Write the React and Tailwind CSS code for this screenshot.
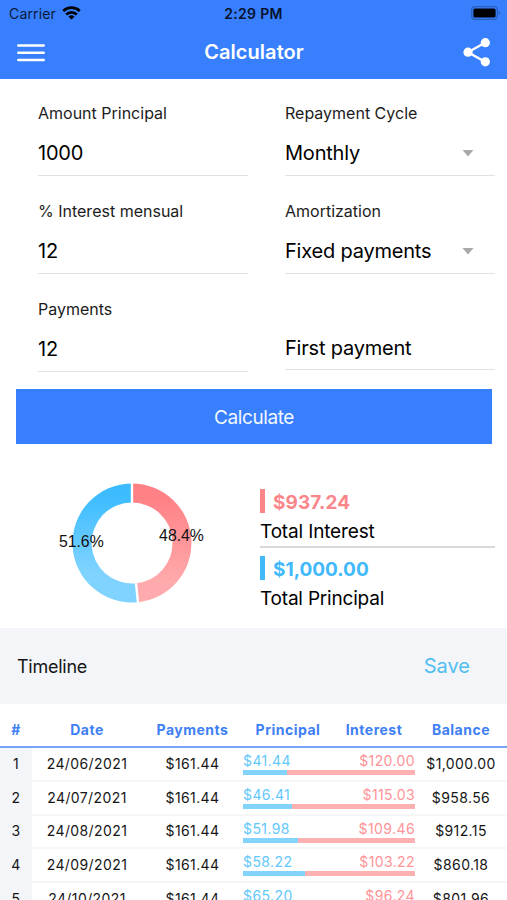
const payments = [
  { date: '24/06/2021', principal: 41.44, interest: 120.0, balance: '$1,000.00' },
  { date: '24/07/2021', principal: 46.41, interest: 115.03, balance: '$958.56' },
  { date: '24/08/2021', principal: 51.98, interest: 109.46, balance: '$912.15' },
  { date: '24/09/2021', principal: 58.22, interest: 103.22, balance: '$860.18' },
  { date: '24/10/2021', principal: 65.2, interest: 96.24, balance: '$801.96' },
]

const tableCols = 'grid grid-cols-[32px_110px_101px_172px_92px]'

function StatusBar() {
  return (
    <div className="flex h-[27px] items-center justify-between pl-[9px] pr-[6px] text-[#0b1a3c]">
      <div className="flex w-[180px] items-center gap-[6px]">
        <span className="text-[14px] tracking-[0.15px]">Carrier</span>
        <svg width="19" height="14" viewBox="0 0 19 14" fill="none" stroke="#000" strokeWidth="2.6" className="mb-[1px]">
          <path d="M1.200 5a12 12 0 0 1 16.600 0" />
          <path d="M4.200 8.500a7.600 7.600 0 0 1 10.600 0" />
          <path d="M9.500 13.600 6.500 10.700a4.300 4.300 0 0 1 6 0z" fill="#000" stroke="none" />
        </svg>
      </div>
      <span className="mr-[3px] text-[14px] font-semibold tracking-[0.3px] text-[#06122e]">2:29 PM</span>
      <div className="flex w-[180px] justify-end">
        <svg width="30" height="14" viewBox="0 0 30 14" fill="none" className="mb-[1px]">
          <rect x="0.7" y="0.7" width="25.6" height="12.6" rx="3.4" stroke="#2a5fb8" strokeWidth="1.2" />
          <rect x="2.4" y="2.4" width="22.2" height="9.2" rx="1.6" fill="#000" />
          <path d="M27.600 5v4c1-.4 1.700-1.200 1.700-2s-.7-1.600-1.700-2z" fill="#2a5fb8" />
        </svg>
      </div>
    </div>
  )
}

function NavBar() {
  return (
    <div className="flex h-[51px] items-center justify-between pl-[17px] pr-[16px]">
      <svg width="28" height="18" viewBox="0 0 28 18" stroke="#fff" strokeWidth="2.5" strokeLinecap="round">
        <path d="M1.300 1.600h25.400M1.300 8.800h25.400M1.300 16h25.400" />
      </svg>
      <h1 className="pb-[2px] text-[20px] font-semibold leading-none tracking-[0.05px] text-white">Calculator</h1>
      <svg width="28" height="30" viewBox="0 0 28 30" fill="#fff" stroke="#fff">
        <path d="M22 4.700 5 14.200l17 9.500" fill="none" strokeWidth="2.400" />
        <circle cx="22.300" cy="4.700" r="4.600" stroke="none" />
        <circle cx="5" cy="14.200" r="4.600" stroke="none" />
        <circle cx="22.300" cy="23.800" r="4.600" stroke="none" />
      </svg>
    </div>
  )
}

function Field({ label, value, select }) {
  return (
    <label className="block h-[98px] pt-[11px]">
      <span className="block h-[24px] text-[16px] leading-[24px] text-[#1c1c1c]">{label}</span>
      <span className="mt-[6px] flex h-[45px] items-center justify-between border-b border-[#e2e2e2] pr-[21px] text-[20px] tracking-[-0.2px] text-black">
        {value}
        {select && (
          <svg width="12" height="7" viewBox="0 0 12 7" fill="#a9a9a9">
            <path d="M.5 0h11L6 6.500z" />
          </svg>
        )}
      </span>
    </label>
  )
}

function Donut() {
  return (
    <svg width="170" height="130" viewBox="-85 -65 170 130" className="font-['Liberation_Sans',sans-serif]">
      <defs>
        <linearGradient id="interest" x1="0" y1="0" x2="0" y2="1">
          <stop offset="0.1" stopColor="#ff8085" />
          <stop offset="0.85" stopColor="#ffabad" />
        </linearGradient>
        <linearGradient id="principal" x1="0" y1="0" x2="0" y2="1">
          <stop offset="0.1" stopColor="#3cbcff" />
          <stop offset="0.75" stopColor="#80d3ff" />
        </linearGradient>
      </defs>
      <path d="M0-59.500A59.500 59.500 0 0 1 5.970 59.200L4.060 40.300A40.500 40.500 0 0 0 0-40.500z" fill="url(#interest)" />
      <path d="M5.970 59.200A59.500 59.500 0 1 1 0-59.500V-40.500A40.500 40.500 0 1 0 4.060 40.300z" fill="url(#principal)" />
      <path d="M0-61v22M3.900 39l2.200 22" stroke="#fff" strokeWidth="2.400" />
      <text x="-50.700" y="3.600" textAnchor="middle" fontSize="15.800" fill="#111">51.6%</text>
      <text x="49.500" y="-1.800" textAnchor="middle" fontSize="15.800" fill="#111">48.4%</text>
    </svg>
  )
}

function PaymentRow({ index, payment }) {
  const { date, principal, interest, balance } = payment
  const share = (principal / (principal + interest)) * 100
  return (
    <div className={`${tableCols} h-[33.8px] text-[14px] tracking-[0.4px] text-[#161616]`}>
      <div className="flex items-center justify-center bg-[#f3f5f9] pb-[3px]">{index}</div>
      <div className="flex items-center justify-center border-b-2 border-[#f6f6f6] pb-px">{date}</div>
      <div className="flex items-center justify-center border-b-2 border-[#f6f6f6] pb-px">{'$161.44'}</div>
      <div className="border-b-2 border-[#f6f6f6] pt-[4px]">
        <div className="flex justify-between leading-[18px]">
          <span className="text-[#62c8fd]">${principal.toFixed(2)}</span>
          <span className="text-[#ff9397]">${interest.toFixed(2)}</span>
        </div>
        <div className="h-[5px] bg-[#ffb0b1]">
          <div className="h-full bg-[#83d4fd]" style={{ width: `${share}%` }} />
        </div>
      </div>
      <div className="flex items-center justify-center border-b-2 border-[#f6f6f6] pb-px">{balance}</div>
    </div>
  )
}

export default function App() {
  return (
    <div className="h-[900px] w-[507px] overflow-hidden bg-white font-[Inter,sans-serif]">
      <header className="h-[79px] bg-[#387ffe]">
        <StatusBar />
        <NavBar />
      </header>

      <form className="grid h-[310px] grid-cols-[210px_210px] gap-x-[37px] pl-[38px] pt-[11px]">
        <div>
          <Field label="Amount Principal" value="1000" />
          <Field label="% Interest mensual" value="12" />
          <Field label="Payments" value="12" />
        </div>
        <div>
          <Field label="Repayment Cycle" value="Monthly" select />
          <Field label="Amortization" value="Fixed payments" select />
          <div className="mt-[40px] flex h-[44px] items-center border-b border-[#e2e2e2] text-[20px] tracking-[-0.2px]">First payment</div>
        </div>
      </form>

      <button type="button" className="mx-[16px] block h-[55px] w-[476px] bg-[#387ffe] pt-[3px] text-[19px] tracking-[-0.4px] text-[#f1f7ff]">
        Calculate
      </button>

      <section className="flex h-[184px] pl-[47px] pt-[34px]">
        <Donut />
        <div className="ml-[43px] mt-[11px] w-[235px]">
          <div className="flex h-[26px] gap-[8px]">
            <span className="h-[24px] w-[5px] bg-[#fb868a]" />
            <strong className="text-[19px] font-bold leading-[28px] tracking-[0.1px] text-[#fb868a]">$937.24</strong>
          </div>
          <p className="h-[33px] border-b-2 border-[#d7d9d8] text-[19px] leading-[34px] tracking-[-0.15px]">Total Interest</p>
          <div className="mt-[8px] flex h-[26px] gap-[8px]">
            <span className="h-[24px] w-[5px] bg-[#41b9fb]" />
            <strong className="text-[19px] font-bold leading-[28px] text-[#41b9fb]">$1,000.00</strong>
          </div>
          <p className="text-[19px] leading-[34px] tracking-[-0.2px]">Total Principal</p>
        </div>
      </section>

      <section>
        <div className="flex h-[76px] items-center justify-between bg-[#f3f5f9] pl-[17px] pr-[37px]">
          <h2 className="text-[18px] tracking-[-0.25px] text-[#161616]">Timeline</h2>
          <button type="button" className="pb-[1px] text-[20px] text-[#4fbff0]">Save</button>
        </div>
        <div className="grid h-[44px] grid-cols-[32px_110px_101px_90px_82px_92px] items-center border-b-2 border-[#78a3fb] pt-[9px] text-center text-[14px] font-bold tracking-[0.5px] text-[#4080f5]">
          <span>#</span>
          <span>Date</span>
          <span>Payments</span>
          <span>Principal</span>
          <span>Interest</span>
          <span>Balance</span>
        </div>
        {payments.map((p, i) => (
          <PaymentRow key={p.date} index={i + 1} payment={p} />
        ))}
      </section>
    </div>
  )
}
